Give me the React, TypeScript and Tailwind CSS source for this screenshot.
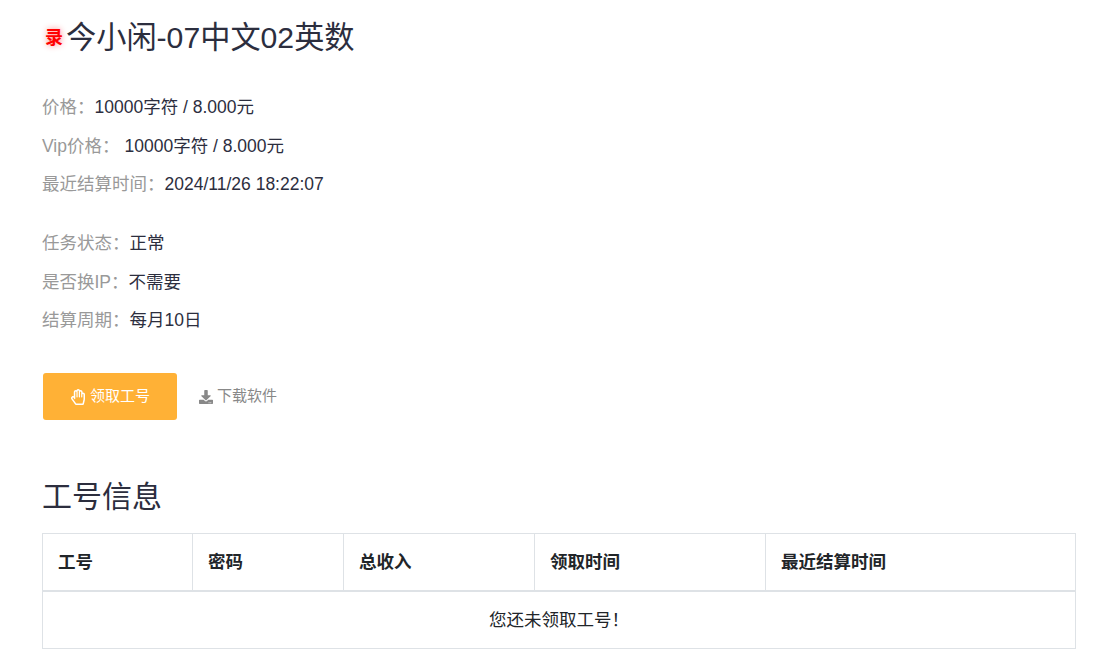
import { FaDownload, FaRegHandPaper } from "react-icons/fa";

const font = { fontFamily: '"Liberation Sans", "Noto Sans CJK SC", sans-serif' };

const Row = ({ label, value, gap = "" }: { label: string; value: string; gap?: string }) => (
  <div className="h-[38.5px] flex items-center text-[17.5px]">
    <span className="text-[#999]">{label}</span>
    <span className={`text-[#2c2e3e] ${gap}`}>{value}</span>
  </div>
);

export default function App() {
  return (
    <div style={font} className="bg-white w-[1095px] h-[672px] overflow-hidden pl-[42px] pr-[19px]">
      <h1 className="h-[75px] flex items-center text-[30.2px] text-[#2c2e3e] font-normal">
        <span className="w-[24px] pl-[3px] pt-[2px] text-[18px] font-bold text-[#f00] [text-shadow:0_0_6px_#f88]">录</span>
        今小闲-07中文02英数
      </h1>

      <div className="mt-[13px]">
        <Row label="价格：" value="10000字符 / 8.000元" />
        <Row label="Vip价格：" value="10000字符 / 8.000元" gap="ml-[5px]" />
        <Row label="最近结算时间：" value="2024/11/26 18:22:07" />
      </div>

      <div className="mt-[20.5px]">
        <Row label="任务状态：" value="正常" />
        <Row label="是否换IP：" value="不需要" />
        <Row label="结算周期：" value="每月10日" />
      </div>

      <div className="mt-[33.5px] flex items-center">
        <button className="ml-px w-[134px] h-[47px] rounded-[3px] bg-[#ffb136] text-white text-[15px] flex items-center justify-center gap-[4px]">
          <FaRegHandPaper className="text-[16px]" />
          领取工号
        </button>
        <a className="ml-[22px] flex items-center gap-[4px] text-[15px] text-[#888]">
          <FaDownload className="text-[14px]" />
          下载软件
        </a>
      </div>

      <h3 className="mt-[53px] h-[46px] flex items-center text-[30px] text-[#2c2e3e] font-normal">工号信息</h3>

      <table className="mt-[14px] w-[1034px] table-fixed border-collapse text-[17.5px] text-[#212529]">
        <thead>
          <tr className="h-[57px] font-bold">
            <th className="w-[150px] border border-b-2 border-[#dee2e6] pl-[15px] text-left">工号</th>
            <th className="w-[151px] border border-b-2 border-[#dee2e6] pl-[15px] text-left">密码</th>
            <th className="w-[191px] border border-b-2 border-[#dee2e6] pl-[15px] text-left">总收入</th>
            <th className="w-[231px] border border-b-2 border-[#dee2e6] pl-[15px] text-left">领取时间</th>
            <th className="border border-b-2 border-[#dee2e6] pl-[15px] text-left">最近结算时间</th>
          </tr>
        </thead>
        <tbody>
          <tr className="h-[58px]">
            <td colSpan={5} className="border border-[#dee2e6] text-center">您还未领取工号！</td>
          </tr>
        </tbody>
      </table>
    </div>
  );
}
